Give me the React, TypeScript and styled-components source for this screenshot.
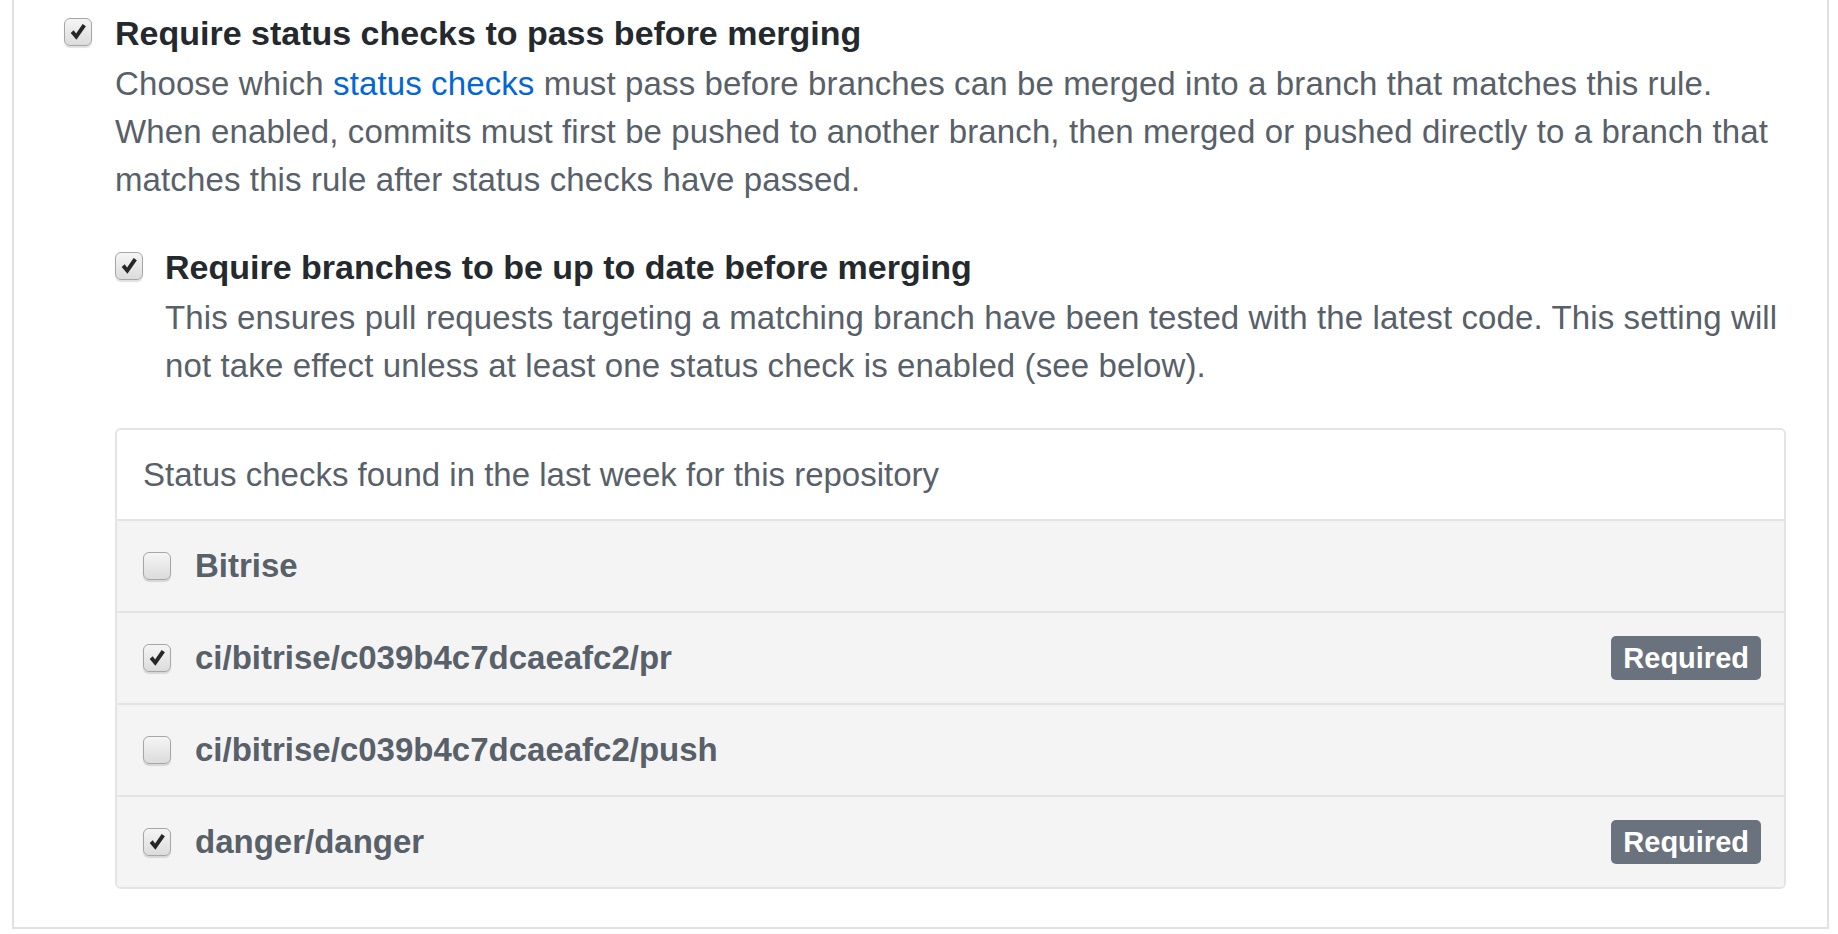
import styled, { createGlobalStyle } from 'styled-components';

const GlobalStyle = createGlobalStyle`
  html, body {
    margin: 0;
    padding: 0;
    background: #ffffff;
  }
  body {
    font-family: "Liberation Sans", Arial, sans-serif;
    color: #24292e;
    -webkit-font-smoothing: antialiased;
  }
`;

interface CheckProps {
  checked?: boolean;
}

const CheckBox = ({ checked }: CheckProps) => {
  return (
    <Box>
      {checked && (
        <svg width="20" height="20" viewBox="0 0 18 18">
          <path d="M2.4 9.8 L5.1 7.5 L7.3 10.4 L13.2 1.8 L16.1 3.9 L7.6 16 Z" fill="#262626" />
        </svg>
      )}
    </Box>
  );
};

interface CheckRowProps {
  name: string;
  checked?: boolean;
  required?: boolean;
}

const StatusRow = ({ name, checked, required }: CheckRowProps) => {
  return (
    <Row>
      <RowCheck>
        <CheckBox checked={checked} />
      </RowCheck>
      <RowLabel>{name}</RowLabel>
      {required && <Badge>Required</Badge>}
    </Row>
  );
};

const checks: CheckRowProps[] = [
  { name: 'Bitrise' },
  { name: 'ci/bitrise/c039b4c7dcaeafc2/pr', checked: true, required: true },
  { name: 'ci/bitrise/c039b4c7dcaeafc2/push' },
  { name: 'danger/danger', checked: true, required: true },
];

const App = () => {
  return (
    <>
      <GlobalStyle />
      <Page>
        <Option>
          <CheckCell>
            <CheckBox checked />
          </CheckCell>
          <OptionBody>
            <Title>Require status checks to pass before merging</Title>
            <Note>
              Choose which <Link href="#">status checks</Link> must pass before branches can be merged into a branch that matches this rule.
              <br />
              When enabled, commits must first be pushed to another branch, then merged or pushed directly to a branch that
              <br />
              matches this rule after status checks have passed.
            </Note>

            <SubOption>
              <CheckCell>
                <CheckBox checked />
              </CheckCell>
              <OptionBody>
                <Title>Require branches to be up to date before merging</Title>
                <Note>
                  This ensures pull requests targeting a matching branch have been tested with the latest code. This setting will
                  <br />
                  not take effect unless at least one status check is enabled (see below).
                </Note>
              </OptionBody>
            </SubOption>

            <ChecksBox>
              <ChecksHeader>Status checks found in the last week for this repository</ChecksHeader>
              {checks.map((check) => (
                <StatusRow key={check.name} {...check} />
              ))}
            </ChecksBox>
          </OptionBody>
        </Option>
      </Page>
    </>
  );
};

const Page = styled.div`
  margin: 0 9px 0 12px;
  padding: 9px 41px 38px 50px;
  border: 2px solid #dfe2e5;
  border-top: none;
  background: #ffffff;
`;

const Option = styled.div`
  display: grid;
  grid-template-columns: 28px 1fr;
  column-gap: 23px;
`;

const SubOption = styled(Option)`
  margin-top: 39px;
  column-gap: 22px;
`;

const CheckCell = styled.div`
  padding-top: 9px;
`;

const Box = styled.span`
  display: flex;
  align-items: center;
  justify-content: center;
  width: 28px;
  height: 28px;
  box-sizing: border-box;
  border: 1.5px solid #a6a6a6;
  border-radius: 6px;
  background: linear-gradient(#f5f5f5, #dcdcdc);
  box-shadow: 0 1.5px 1px rgba(0, 0, 0, 0.12);
`;

const OptionBody = styled.div`
  min-width: 0;
`;

const Title = styled.div`
  font-size: 34px;
  line-height: 48px;
  font-weight: 700;
  color: #24292e;
  white-space: nowrap;
`;

const Note = styled.p`
  margin: 3px 0 0;
  font-size: 33px;
  line-height: 48px;
  letter-spacing: 0.12px;
  color: #586069;
  white-space: nowrap;
`;

const Link = styled.a`
  color: #0366d6;
  text-decoration: none;
`;

const ChecksBox = styled.div`
  margin-top: 38px;
  border: 2px solid #e4e4e4;
  border-radius: 6px;
  overflow: hidden;
`;

const ChecksHeader = styled.div`
  display: flex;
  align-items: center;
  height: 89px;
  padding: 0 26px;
  font-size: 33px;
  color: #586069;
  background: #ffffff;
  border-bottom: 2px solid #e4e4e4;
`;

const Row = styled.div`
  display: flex;
  align-items: center;
  height: 90px;
  padding: 0 23px 0 26px;
  background: #f4f4f4;
  border-bottom: 2px solid #e4e4e4;

  &:last-child {
    border-bottom: none;
  }
`;

const RowCheck = styled.div`
  display: flex;
  margin-right: 24px;
`;

const RowLabel = styled.span`
  flex: 1;
  font-size: 33px;
  font-weight: 700;
  color: #586069;
`;

const Badge = styled.span`
  display: inline-flex;
  align-items: center;
  height: 44px;
  padding: 0 12px;
  border-radius: 5px;
  background: #6a737d;
  color: #ffffff;
  font-size: 29px;
  font-weight: 700;
`;

export default App;
